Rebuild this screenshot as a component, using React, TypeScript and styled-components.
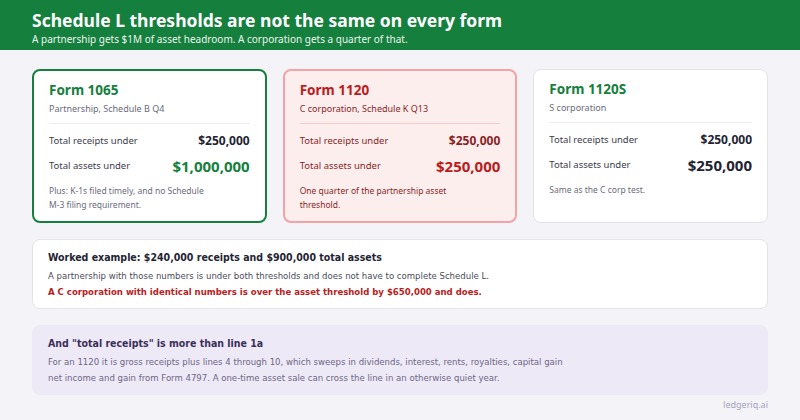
import React from "react";
import styled, { createGlobalStyle } from "styled-components";

const Global = createGlobalStyle`
  body { margin: 0; background: #f4f3f8; font-family: "Noto Sans", "Open Sans", sans-serif; }
`;

const Page = styled.div`
  width: 800px;
  height: 420px;
  display: flex;
  flex-direction: column;
`;

const Header = styled.header`
  background: #15803d;
  color: #fff;
  padding: 9px 32px 0;
  height: 50px;
  box-sizing: border-box;
`;

const Title = styled.h1`
  margin: 0;
  font-size: 17.5px;
  font-weight: 700;
  line-height: 22px;
`;

const Sub = styled.div`
  font-size: 10px;
  line-height: 14px;
  margin-top: 1px;
  opacity: 0.92;
`;

const Body = styled.main`
  padding: 19px 32px 0;
  display: flex;
  flex-direction: column;
  gap: 16px;
`;

const Cards = styled.div`
  display: grid;
  grid-template-columns: repeat(3, 1fr);
  gap: 16px;
`;

type Tone = "green" | "red" | "plain";
const tones = {
  green: { border: "#15803d", bg: "#fff", title: "#15803d", sub: "#6b6b7b", text: "#3c3c4c", small: "#1f2433", big: "#15803d", note: "#6b6b7b", rule: "#eeedf4", bw: "2px" },
  red: { border: "#f2a3a3", bg: "#fdeeee", title: "#b91c1c", sub: "#8a1f1f", text: "#8a1f1f", small: "#8a1f1f", big: "#b91c1c", note: "#8a1f1f", rule: "#f6cccc", bw: "2px" },
  plain: { border: "#e4e3ea", bg: "#fff", title: "#15803d", sub: "#6b6b7b", text: "#3c3c4c", small: "#1f2433", big: "#1f2433", note: "#6b6b7b", rule: "#eeedf4", bw: "1px" },
};

const Card = styled.div<{ $t: Tone }>`
  box-sizing: border-box;
  height: 154px;
  border: ${(p) => tones[p.$t].bw} solid ${(p) => tones[p.$t].border};
  background: ${(p) => tones[p.$t].bg};
  border-radius: 8px;
  padding: 9px 15px 0;
  color: ${(p) => tones[p.$t].text};
`;

const CardTitle = styled.div<{ $t: Tone }>`
  color: ${(p) => tones[p.$t].title};
  font-size: 13.5px;
  font-weight: 700;
  line-height: 20px;
`;

const CardSub = styled.div<{ $t: Tone }>`
  color: ${(p) => tones[p.$t].sub};
  font-size: 9px;
  line-height: 14px;
  margin-top: 2px;
  padding-bottom: 7px;
  border-bottom: 1.5px solid ${(p) => tones[p.$t].rule};
`;

const Row = styled.div`
  display: flex;
  justify-content: space-between;
  align-items: center;
  font-size: 9.5px;
  height: 25px;
`;

const Amount = styled.span<{ $t: Tone; $big?: boolean }>`
  font-weight: 700;
  font-size: ${(p) => (p.$big ? "15px" : "12px")};
  color: ${(p) => (p.$big ? tones[p.$t].big : tones[p.$t].small)};
`;

const Rows = styled.div`
  padding-top: 4px;
`;

const Note = styled.div<{ $t: Tone }>`
  color: ${(p) => tones[p.$t].note};
  font-size: 8.5px;
  line-height: 14px;
  margin-top: 6px;
  max-width: 160px;
`;

const Panel = styled.section<{ $muted?: boolean }>`
  background: ${(p) => (p.$muted ? "#ede9f6" : "#fff")};
  border: 1px solid ${(p) => (p.$muted ? "#ede9f6" : "#e4e3ea")};
  border-radius: 8px;
  padding: 9px 15px 8px;
  font-family: "DejaVu Sans Condensed", "Noto Sans", sans-serif;
`;

const PanelTitle = styled.div<{ $muted?: boolean }>`
  font-size: 10.5px;
  font-weight: 700;
  color: ${(p) => (p.$muted ? "#3b2f5a" : "#1f2433")};
  line-height: 16px;
`;

const Line = styled.p<{ $warn?: boolean; $muted?: boolean }>`
  margin: 3px 0 0;
  font-size: 9.5px;
  line-height: 16px;
  font-weight: ${(p) => (p.$warn ? 700 : 400)};
  color: ${(p) => (p.$warn ? "#b91c1c" : p.$muted ? "#6e6786" : "#4b4b5a")};
  max-width: ${(p) => (p.$muted ? "520px" : "none")};
  & + & { margin-top: 0; }
`;

const Footer = styled.div`
  text-align: right;
  padding: 4px 32px 0;
  font-size: 9px;
  line-height: 12px;
  color: #a5a3b8;
`;

const forms = [
  { t: "green" as Tone, name: "Form 1065", sub: "Partnership, Schedule B Q4", assets: "$1,000,000", note: "Plus: K-1s filed timely, and no Schedule M-3 filing requirement." },
  { t: "red" as Tone, name: "Form 1120", sub: "C corporation, Schedule K Q13", assets: "$250,000", note: "One quarter of the partnership asset threshold." },
  { t: "plain" as Tone, name: "Form 1120S", sub: "S corporation", assets: "$250,000", note: "Same as the C corp test." },
];

export default function App() {
  return (
    <Page>
      <Global />
      <Header>
        <Title>Schedule L thresholds are not the same on every form</Title>
        <Sub>A partnership gets $1M of asset headroom. A corporation gets a quarter of that.</Sub>
      </Header>
      <Body>
        <Cards>
          {forms.map((f) => (
            <Card key={f.name} $t={f.t}>
              <CardTitle $t={f.t}>{f.name}</CardTitle>
              <CardSub $t={f.t}>{f.sub}</CardSub>
              <Rows>
                <Row>
                  <span>Total receipts under</span>
                  <Amount $t={f.t}>$250,000</Amount>
                </Row>
                <Row>
                  <span>Total assets under</span>
                  <Amount $t={f.t} $big>{f.assets}</Amount>
                </Row>
              </Rows>
              <Note $t={f.t}>{f.note}</Note>
            </Card>
          ))}
        </Cards>
        <Panel>
          <PanelTitle>Worked example: $240,000 receipts and $900,000 total assets</PanelTitle>
          <Line>A partnership with those numbers is under both thresholds and does not have to complete Schedule L.</Line>
          <Line $warn>A C corporation with identical numbers is over the asset threshold by $650,000 and does.</Line>
        </Panel>
        <Panel $muted>
          <PanelTitle $muted>And "total receipts" is more than line 1a</PanelTitle>
          <Line $muted>For an 1120 it is gross receipts plus lines 4 through 10, which sweeps in dividends, interest, rents, royalties, capital gain net income and gain from Form 4797. A one-time asset sale can cross the line in an otherwise quiet year.</Line>
        </Panel>
      </Body>
      <Footer>ledgeriq.ai</Footer>
    </Page>
  );
}
